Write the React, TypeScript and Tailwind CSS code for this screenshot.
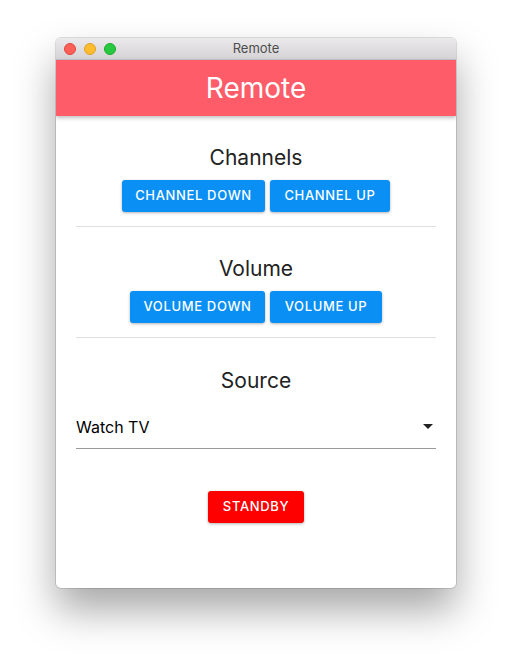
import React from "react";

function Btn({ label, w, red }: { label: string; w: string; red?: boolean }) {
  return (
    <button
      className={`${w} h-8 rounded-[3px] text-white text-[13px] font-medium tracking-[0.05em] shadow-[0_1px_3px_rgba(0,0,0,0.3)] ${red ? "bg-[#ff0000]" : "bg-[#0a8ff5]"}`}
    >
      {label}
    </button>
  );
}

export default function App() {
  return (
    <div className="w-[512px] h-[662px] bg-white pt-[38px] pl-[56px]" style={{ fontFamily: "Inter, 'Noto Sans', sans-serif" }}>
      <div className="w-[400px] h-[550px] rounded-[5px] bg-white shadow-[0_22px_40px_rgba(0,0,0,0.35),0_0_0_1px_rgba(0,0,0,0.12)] overflow-hidden flex flex-col">
        <div className="h-[22px] relative flex items-center bg-gradient-to-b from-[#ebe9eb] to-[#d5d3d5] border-b border-[#c4c2c4]">
          <div className="flex gap-[8px] pl-[8px]">
            <span className="w-3 h-3 rounded-full bg-[#fe5f57] border border-[#e0443e]" />
            <span className="w-3 h-3 rounded-full bg-[#febc2e] border border-[#dea123]" />
            <span className="w-3 h-3 rounded-full bg-[#28c840] border border-[#1aab29]" />
          </div>
          <div className="absolute inset-0 flex items-center justify-center text-[13px] text-[#4d4d4d]">Remote</div>
        </div>
        <div className="h-[56px] bg-[#ff5c6a] flex items-center justify-center text-white text-[28px] shadow-[0_2px_4px_rgba(0,0,0,0.25)] relative z-10">
          Remote
        </div>
        <div className="flex flex-col px-5 text-[#222]">
          <div className="text-[21px] text-center leading-[28px] mt-[28px]">Channels</div>
          <div className="flex justify-center gap-[5px] mt-[8px]">
            <Btn label="CHANNEL DOWN" w="w-[143px]" />
            <Btn label="CHANNEL UP" w="w-[120px]" />
          </div>
          <div className="h-px bg-[#e0e0e0] mt-[14px]" />
          <div className="text-[21px] text-center leading-[28px] mt-[28px]">Volume</div>
          <div className="flex justify-center gap-[5px] mt-[8px]">
            <Btn label="VOLUME DOWN" w="w-[135px]" />
            <Btn label="VOLUME UP" w="w-[112px]" />
          </div>
          <div className="h-px bg-[#e0e0e0] mt-[14px]" />
          <div className="text-[21px] text-center leading-[28px] mt-[29px]">Source</div>
          <div className="mt-[15px] h-[39px] pb-[5px] flex items-center justify-between border-b border-[#9a9a9a] text-[16px] text-black">
            <span>Watch TV</span>
            <svg width="10" height="5" viewBox="0 0 10 5" className="mr-[3px]">
              <path d="M0 0 L10 0 L5 5 Z" fill="#222" />
            </svg>
          </div>
          <div className="flex justify-center mt-[42px]">
            <Btn label="STANDBY" w="w-[96px]" red />
          </div>
        </div>
      </div>
    </div>
  );
}
